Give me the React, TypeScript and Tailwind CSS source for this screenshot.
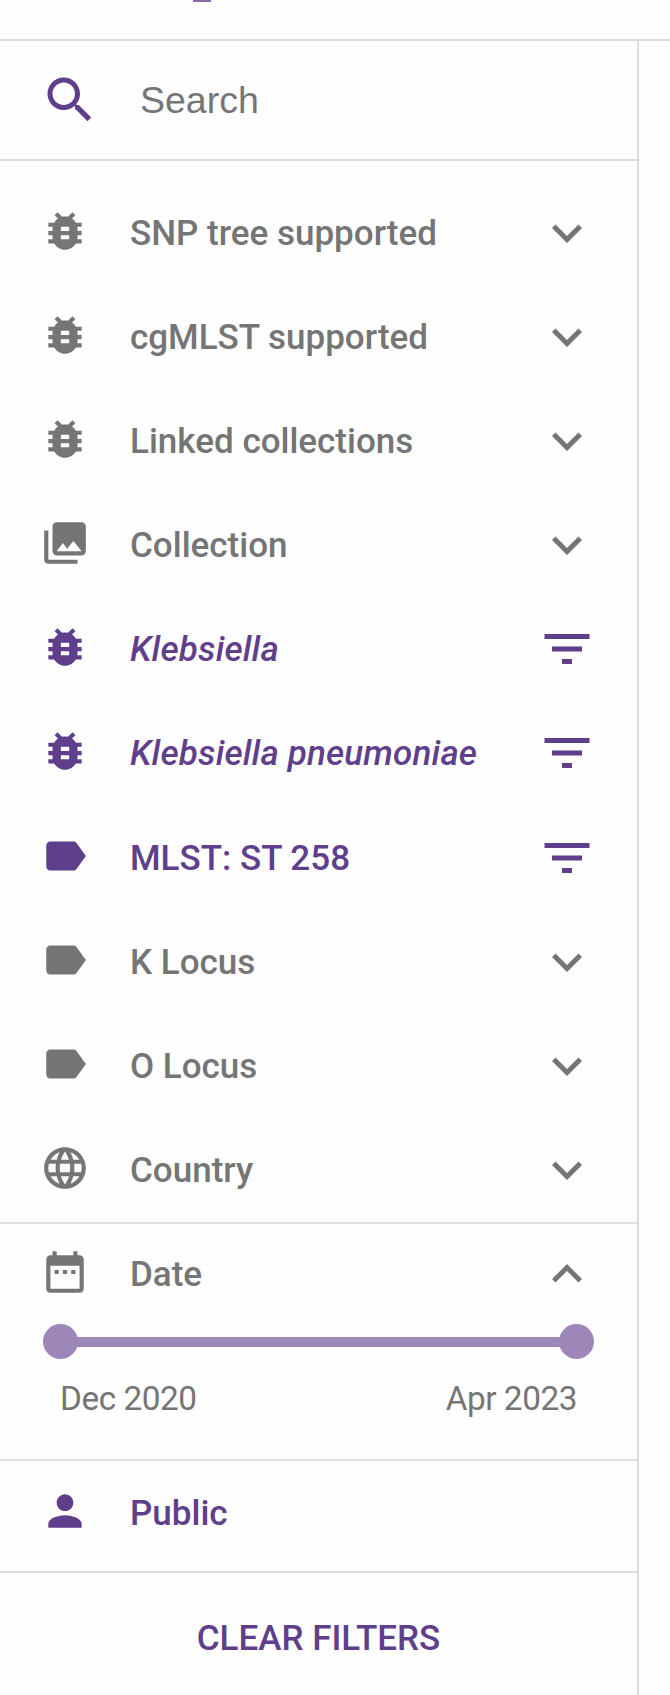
import type { ReactNode } from "react";

const paths = {
  search:
    "M15.5 14h-.79l-.28-.27C15.41 12.59 16 11.11 16 9.5 16 5.91 13.09 3 9.5 3S3 5.91 3 9.5 5.91 16 9.5 16c1.61 0 3.09-.59 4.23-1.57l.27.28v.79l5 4.99L20.49 19l-4.99-5zm-6 0C7.01 14 5 11.99 5 9.5S7.01 5 9.5 5 14 7.01 14 9.5 11.99 14 9.5 14z",
  bug: "M20 8h-2.81c-.45-.78-1.07-1.45-1.82-1.96L17 4.41 15.59 3l-2.17 2.17C12.96 5.06 12.49 5 12 5c-.49 0-.96.06-1.41.17L8.41 3 7 4.41l1.62 1.63C7.88 6.55 7.26 7.22 6.81 8H4v2h2.09c-.05.33-.09.66-.09 1v1H4v2h2v1c0 .34.04.67.09 1H4v2h2.81c1.04 1.79 2.97 3 5.19 3s4.15-1.21 5.19-3H20v-2h-2.09c.05-.33.09-.66.09-1v-1h2v-2h-2v-1c0-.34-.04-.67-.09-1H20V8zm-6 8h-4v-2h4v2zm0-4h-4v-2h4v2z",
  collection:
    "M22 16V4c0-1.100-.9-2-2-2H8c-1.100 0-2 .9-2 2v12c0 1.100.9 2 2 2h12c1.100 0 2-.9 2-2zm-11-4l2.030 2.710L16 11l4 5H8l3-4zM2 6v14c0 1.100.9 2 2 2h14v-2H4V6H2z",
  label:
    "M17.630 5.840C17.270 5.330 16.670 5 16 5L5 5.010C3.900 5.010 3 5.900 3 7v10c0 1.100.9 1.990 2 1.990L16 19c.67 0 1.270-.33 1.630-.84L22 12l-4.370-6.160z",
  globe:
    "M11.99 2C6.47 2 2 6.48 2 12s4.470 10 9.990 10C17.520 22 22 17.520 22 12S17.520 2 11.990 2zm6.930 6h-2.950c-.32-1.250-.78-2.450-1.380-3.560 1.840.63 3.370 1.910 4.330 3.560zM12 4.040c.83 1.200 1.480 2.530 1.910 3.960h-3.820c.43-1.430 1.080-2.760 1.910-3.960zM4.260 14C4.100 13.360 4 12.690 4 12s.1-1.360.26-2h3.380c-.08.66-.14 1.320-.14 2 0 .68.06 1.340.14 2H4.260zm.82 2h2.950c.32 1.250.78 2.450 1.380 3.560-1.840-.63-3.370-1.900-4.330-3.560zm2.950-8H5.080c.96-1.660 2.490-2.930 4.330-3.560C8.810 5.550 8.350 6.750 8.030 8zM12 19.960c-.83-1.200-1.480-2.530-1.910-3.960h3.820c-.43 1.430-1.080 2.760-1.910 3.960zM14.340 14H9.660c-.09-.66-.16-1.320-.16-2 0-.68.07-1.350.16-2h4.680c.09.65.16 1.320.16 2 0 .68-.07 1.340-.16 2zm.25 5.560c.6-1.110 1.060-2.310 1.380-3.560h2.950c-.96 1.650-2.490 2.930-4.330 3.560zM16.360 14c.08-.66.14-1.320.14-2 0-.68-.06-1.340-.14-2h3.380c.16.64.26 1.310.26 2s-.1 1.360-.26 2h-3.380z",
  date: "M9 11H7v2h2v-2zm4 0h-2v2h2v-2zm4 0h-2v2h2v-2zm2-7h-1V2h-2v2H8V2H6v2H5c-1.110 0-1.990.9-1.990 2L3 20c0 1.100.89 2 2 2h14c1.100 0 2-.9 2-2V6c0-1.100-.9-2-2-2zm0 16H5V9h14v11z",
  person:
    "M12 12c2.210 0 4-1.790 4-4s-1.790-4-4-4-4 1.790-4 4 1.790 4 4 4zm0 2c-2.670 0-8 1.340-8 4v2h16v-2c0-2.660-5.330-4-8-4z",
  down: "M16.590 8.590L12 13.170 7.410 8.590 6 10l6 6 6-6z",
  up: "M12 8l-6 6 1.410 1.410L12 10.830l4.590 4.580L18 14z",
  filter: "M10 18h4v-2h-4v2zM3 6v2h18V6H3zm3 7h12v-2H6v2z",
};

type IconName = keyof typeof paths;

function Icon({ name, className }: { name: IconName; className: string }) {
  return (
    <svg viewBox="0 0 24 24" fill="currentColor" className={`shrink-0 ${className}`}>
      <path d={paths[name]} />
    </svg>
  );
}

interface RowProps {
  icon: IconName;
  label: ReactNode;
  end?: IconName;
  active?: boolean;
}

function Row({ icon, label, end, active }: RowProps) {
  return (
    <button
      type="button"
      className={`flex h-[104.09px] w-full shrink-0 items-center pl-10 pr-10 text-left ${
        active ? "text-[#5f3f8c]" : "text-[#757575]"
      }`}
    >
      <Icon name={icon} className="mb-1 size-[50px]" />
      <span className="ml-10 grow pt-[2px] text-[35px] leading-[50px] font-medium">{label}</span>
      {end && <Icon name={end} className="size-[60px]" />}
    </button>
  );
}

function Species({ name }: { name: string }) {
  return <em className="tracking-[0.16px]">{name}</em>;
}

const filters: RowProps[] = [
  { icon: "bug", label: "SNP tree supported", end: "down" },
  { icon: "bug", label: "cgMLST supported", end: "down" },
  { icon: "bug", label: "Linked collections", end: "down" },
  { icon: "collection", label: "Collection", end: "down" },
  { icon: "bug", label: <Species name="Klebsiella" />, end: "filter", active: true },
  { icon: "bug", label: <Species name="Klebsiella pneumoniae" />, end: "filter", active: true },
  { icon: "label", label: "MLST: ST 258", end: "filter", active: true },
  { icon: "label", label: "K Locus", end: "down" },
  { icon: "label", label: "O Locus", end: "down" },
  { icon: "globe", label: "Country", end: "down" },
];

export default function App() {
  return (
    <div className="flex h-[1695px] w-[670px] flex-col overflow-hidden bg-[#fefefe] font-[Roboto,sans-serif]">
      <header className="h-[41px] shrink-0 border-b-2 border-[#dcdcdc]">
        <div className="ml-[193px] h-[2px] w-[18px] bg-[#8a6cab]" />
      </header>
      <aside className="flex w-[639px] grow flex-col border-r-2 border-[#dcdcdc]">
        <label className="flex h-[120px] shrink-0 items-center border-b-2 border-[#dcdcdc] pl-10 text-[#5f3f8c]">
          <Icon name="search" className="size-[60px]" />
          <input
            type="text"
            placeholder="Search"
            className="ml-10 w-[440px] bg-transparent font-['Liberation_Sans',Arial,sans-serif] text-[37.500px] leading-[50px] outline-none placeholder:text-[#757575]"
          />
        </label>
        <nav className="flex h-[1061px] shrink-0 flex-col pt-5">
          {filters.map((row, i) => (
            <Row key={i} {...row} />
          ))}
        </nav>
        <section className="h-[237px] shrink-0 border-t-2 border-[#dfdfdf]">
          <div className="-mt-[2px]">
            <Row icon="date" label="Date" end="up" />
          </div>
          <div className="mx-[43px] -mt-[2px] flex h-[35px] items-center">
            <span className="size-[35px] shrink-0 rounded-full bg-[#9c87b8]" />
            <span className="-mx-px h-[10px] grow bg-[#9c87b8]" />
            <span className="size-[35px] shrink-0 rounded-full bg-[#9c87b8]" />
          </div>
          <div className="mx-[60px] mt-[15px] flex justify-between text-[33.33px] leading-[50px] tracking-[-0.45px] text-[#757575]">
            <span>Dec 2020</span>
            <span>Apr 2023</span>
          </div>
        </section>
        <section className="flex h-[112px] shrink-0 items-start border-t-2 border-[#dfdfdf]">
          <Row icon="person" label="Public" active />
        </section>
        <button
          type="button"
          className="grow border-t-2 border-[#dcdcdc] pt-[9px] text-[35px] leading-[50px] font-medium text-[#5f3f8c] uppercase"
        >
          Clear filters
        </button>
      </aside>
    </div>
  );
}
